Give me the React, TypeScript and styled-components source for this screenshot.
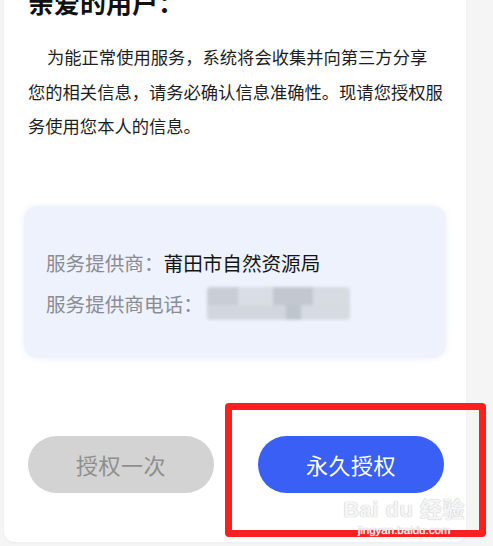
import styled, { createGlobalStyle } from "styled-components";

const GlobalStyle = createGlobalStyle`
  html, body {
    margin: 0;
    padding: 0;
    background: #f5f5f5;
  }
  * {
    box-sizing: border-box;
  }
`;

const StyledPage = styled.div`
  position: relative;
  width: 493px;
  height: 546px;
  overflow: hidden;
  background: #f5f5f5;
  padding: 0 27px 0 4px;
  font-family: "Noto Sans CJK SC", "Noto Sans", sans-serif;
`;

const StyledCard = styled.div`
  display: flow-root;
  height: 542px;
  background: #ffffff;
  border-radius: 0 0 10px 10px;
  padding: 0 0 0 20px;
  box-shadow: 0 1px 3px rgba(0, 0, 0, 0.04);
`;

const StyledTitle = styled.h1`
  margin: -11px 0 0 4px;
  font-size: 26px;
  line-height: 26px;
  font-weight: 700;
  color: #111111;
`;

const StyledIntro = styled.div`
  margin: 25px 0 0 4px;
  font-size: 17.3px;
  line-height: 34.5px;
  color: #1e1e1e;
  white-space: nowrap;
`;

const StyledIntroLine = styled.div<{ $indent?: number }>`
  padding-left: ${(p) => p.$indent ?? 0}px;
`;

const StyledInfoBox = styled.div`
  margin-top: 62px;
  width: 422px;
  padding: 36px 22px 34px;
  background: #edf2fd;
  border-radius: 14px;
  box-shadow: 0 0 6px rgba(220, 228, 245, 0.6);
`;

const StyledInfoRow = styled.div`
  display: flex;
  align-items: center;
  height: 41px;
  font-size: 19.6px;
`;

const StyledInfoLabel = styled.span`
  color: #8a8d93;
`;

const StyledInfoValue = styled.span`
  color: #151515;
`;

const StyledBlurred = styled.div`
  width: 143px;
  height: 33px;
  margin-left: 4px;
  border-radius: 4px;
  filter: blur(1.5px);
  background:
    linear-gradient(90deg, #c9ced6 0 22%, #d9dde4 22% 46%, #c3c8d0 46% 74%, #d7dbe2 74% 100%) top / 100% 55% no-repeat,
    linear-gradient(90deg, #d2d6dd 0 55%, #bfc5cd 55% 66%, #d6dae1 66% 100%) bottom / 100% 45% no-repeat;
`;

const StyledButtonRow = styled.div`
  display: flex;
  gap: 44px;
  margin: 78px 0 0 4px;
`;

const StyledButton = styled.button<{ $primary?: boolean }>`
  width: 186px;
  height: 57px;
  border: none;
  border-radius: 29px;
  font-family: inherit;
  font-size: 22px;
  letter-spacing: 0.5px;
  background: ${(p) => (p.$primary ? "#3a5ff5" : "#d3d3d3")};
  color: ${(p) => (p.$primary ? "#ffffff" : "#8e8e8e")};
`;

const StyledHighlight = styled.div`
  position: absolute;
  left: 225px;
  top: 403px;
  width: 261px;
  height: 134px;
  border: 7px solid #fb1f1f;
  border-radius: 4px;
  pointer-events: none;
`;

const StyledWatermark = styled.div`
  position: absolute;
  right: 28px;
  bottom: 10px;
  display: flex;
  flex-direction: column;
  align-items: center;
  color: rgba(255, 255, 255, 0.85);
  text-shadow: 0 0 1px #c4c4c4, 0 0 1px #c4c4c4;
  font-family: "Liberation Sans", "Noto Sans CJK SC", sans-serif;
  line-height: 1;
`;

const StyledWatermarkBrand = styled.div`
  font-size: 22px;
  font-weight: 700;
  letter-spacing: 0.5px;
`;

const StyledWatermarkUrl = styled.div`
  margin-top: 4px;
  font-size: 11.5px;
`;

export default function App() {
  return (
    <>
      <GlobalStyle />
      <StyledPage>
        <StyledCard>
          <StyledTitle>亲爱的用户：</StyledTitle>
          <StyledIntro>
            <StyledIntroLine $indent={19}>为能正常使用服务，系统将会收集并向第三方分享</StyledIntroLine>
            <StyledIntroLine>您的相关信息，请务必确认信息准确性。现请您授权服</StyledIntroLine>
            <StyledIntroLine>务使用您本人的信息。</StyledIntroLine>
          </StyledIntro>
          <StyledInfoBox>
            <StyledInfoRow>
              <StyledInfoLabel>服务提供商：</StyledInfoLabel>
              <StyledInfoValue>莆田市自然资源局</StyledInfoValue>
            </StyledInfoRow>
            <StyledInfoRow>
              <StyledInfoLabel>服务提供商电话：</StyledInfoLabel>
              <StyledBlurred />
            </StyledInfoRow>
          </StyledInfoBox>
          <StyledButtonRow>
            <StyledButton>授权一次</StyledButton>
            <StyledButton $primary>永久授权</StyledButton>
          </StyledButtonRow>
        </StyledCard>
        <StyledHighlight />
        <StyledWatermark>
          <StyledWatermarkBrand>Bai du 经验</StyledWatermarkBrand>
          <StyledWatermarkUrl>jingyan.baidu.com</StyledWatermarkUrl>
        </StyledWatermark>
      </StyledPage>
    </>
  );
}
